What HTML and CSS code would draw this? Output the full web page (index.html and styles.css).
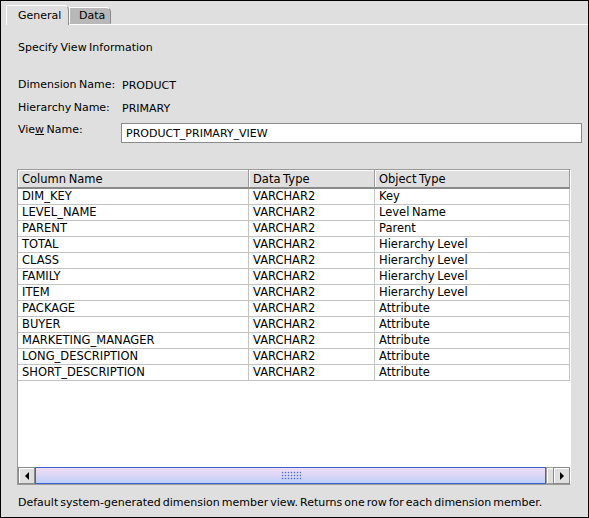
FILE: index.html
```html
<html>

<head>
    <meta name="viewport" content="width=device-width, initial-scale=1.0">
    <title>Create View</title>
    <link rel="stylesheet" href="styles.css">
</head>

<body>
    <div class="window">
        <div class="tabs">
            <div class="tab tab-active">General</div>
            <div class="tab tab-data">Data</div>
        </div>
        <div class="panel">
            <p class="intro">Specify View Information</p>
            <div class="fields">
                <div class="field">
                    <span class="label">Dimension Name:</span>
                    <span class="value">PRODUCT</span>
                </div>
                <div class="field">
                    <span class="label">Hierarchy Name:</span>
                    <span class="value">PRIMARY</span>
                </div>
                <div class="field field-input">
                    <label class="label">Vie<u>w</u> Name:</label>
                    <div class="text-input">PRODUCT_PRIMARY_VIEW</div>
                </div>
            </div>
            <div class="grid-pane">
                <div class="grid-view">
                    <table class="grid">
                        <colgroup>
                            <col class="col-name">
                            <col class="col-type">
                            <col class="col-object">
                        </colgroup>
                        <thead>
                            <tr><th>Column Name</th><th>Data Type</th><th>Object Type</th></tr>
                        </thead>
                        <tbody>
                            <tr><td>DIM_KEY</td><td>VARCHAR2</td><td>Key</td></tr>
                            <tr><td>LEVEL_NAME</td><td>VARCHAR2</td><td>Level Name</td></tr>
                            <tr><td>PARENT</td><td>VARCHAR2</td><td>Parent</td></tr>
                            <tr><td>TOTAL</td><td>VARCHAR2</td><td>Hierarchy Level</td></tr>
                            <tr><td>CLASS</td><td>VARCHAR2</td><td>Hierarchy Level</td></tr>
                            <tr><td>FAMILY</td><td>VARCHAR2</td><td>Hierarchy Level</td></tr>
                            <tr><td>ITEM</td><td>VARCHAR2</td><td>Hierarchy Level</td></tr>
                            <tr><td>PACKAGE</td><td>VARCHAR2</td><td>Attribute</td></tr>
                            <tr><td>BUYER</td><td>VARCHAR2</td><td>Attribute</td></tr>
                            <tr><td>MARKETING_MANAGER</td><td>VARCHAR2</td><td>Attribute</td></tr>
                            <tr><td>LONG_DESCRIPTION</td><td>VARCHAR2</td><td>Attribute</td></tr>
                            <tr><td>SHORT_DESCRIPTION</td><td>VARCHAR2</td><td>Attribute</td></tr>
                        </tbody>
                    </table>
                </div>
                <div class="hscroll">
                    <div class="scroll-btn"><span class="arrow arrow-left"></span></div>
                    <div class="scroll-thumb"><span class="grip"></span></div>
                    <div class="scroll-track"></div>
                    <div class="scroll-btn"><span class="arrow arrow-right"></span></div>
                </div>
            </div>
            <p class="note">Default system-generated dimension member view. Returns one row for each dimension member.</p>
        </div>
    </div>
</body>

</html>
```

FILE: styles.css
```css
* {
    box-sizing: border-box;
}

body {
    margin: 0;
    background-color: #fff;
    font-family: "DejaVu Sans", sans-serif;
    font-size: 11px;
    color: #000;
    word-spacing: -1px;
}

.window {
    width: 589px;
    height: 518px;
    border: 1px solid #000;
    background-color: #dfdfdf;
    display: flex;
    flex-direction: column;
}

/* tabs */

.tabs {
    display: flex;
    align-items: flex-end;
    height: 23px;
    padding: 4px 0 0 5px;
}

.tab {
    height: 17px;
    line-height: 16px;
    border: 1px solid;
    border-color: #fff #8a8a8a transparent #fff;
    border-radius: 0 5px 0 0;
    background-color: #b8b8b8;
}

.tab-active {
    width: 63px;
    height: 20px;
    padding-left: 11px;
    line-height: 19px;
    margin-bottom: -1px;
    background-color: #dfdfdf;
    border-bottom: none;
    position: relative;
    z-index: 1;
}

.tab-data {
    width: 42px;
    padding-left: 9px;
}

/* panel */

.panel {
    flex: 1;
    margin-left: 5px;
    border-top: 1px solid #fff;
    padding: 0 6px 0 12px;
}

.intro {
    margin: 16px 0 0;
    line-height: 14px;
}

.fields {
    margin-top: 18px;
}

.field {
    display: flex;
    align-items: center;
    height: 23px;
}

.label {
    width: 103px;
    flex-shrink: 0;
}

.value {
    padding: 2px 0 0 1px;
}

.field-input {
    height: 24px;
    align-items: flex-start;
}

.field-input .label {
    padding-top: 4px;
    line-height: 14px;
}

.text-input {
    flex: 1;
    margin-top: 4px;
    height: 20px;
    line-height: 19px;
    padding: 0 4px;
    border: 1px solid #8a8a8a;
    background-color: #fff;
}

/* table */

.grid-pane {
    margin: 26px 0 0 -1px;
    width: 554px;
    height: 316px;
    border: 1px solid #9a9a9a;
    border-right-color: #fff;
    background-color: #fff;
    display: flex;
    flex-direction: column;
}

.grid-view {
    flex: 1;
    overflow: hidden;
}

.grid {
    table-layout: fixed;
    width: 552px;
    border-collapse: separate;
    border-spacing: 0;
    font-size: 11.5px;
    word-spacing: -1px;
}

.col-name {
    width: 231px;
}

.col-type {
    width: 126px;
}

.col-object {
    width: 195px;
}

.grid th {
    height: 19px;
    padding: 1px 4px 0;
    text-align: left;
    font-weight: normal;
    background-color: #dfdfdf;
    border-right: 1px solid #9a9a9a;
    border-bottom: 2px solid #8a8a8a;
    box-shadow: inset 1px 1px #fff;
}

.grid td {
    height: 16px;
    padding: 0 4px;
    line-height: 15px;
    white-space: nowrap;
    border-right: 1px solid #c4c4c4;
    border-bottom: 1px solid #c4c4c4;
}

/* horizontal scrollbar */

.hscroll {
    display: flex;
    height: 17px;
    flex-shrink: 0;
}

.scroll-btn {
    width: 17px;
    display: flex;
    justify-content: center;
    align-items: center;
    background-color: #dfdfdf;
    border: 1px solid #8a8a8a;
    box-shadow: inset 1px 1px #fff;
}

.arrow {
    width: 0;
    height: 0;
    border-top: 4px solid transparent;
    border-bottom: 4px solid transparent;
}

.arrow-left {
    border-right: 4px solid #000;
}

.arrow-right {
    border-left: 4px solid #000;
}

.scroll-thumb {
    width: 511px;
    display: flex;
    justify-content: center;
    align-items: center;
    border: 1px solid #3a64cc;
    background-image: linear-gradient(to bottom, #eedcf4, #dcd6f6 50%, #bccff8);
}

.grip {
    width: 20px;
    height: 9px;
    background-image: radial-gradient(#4a70d4 35%, transparent 50%);
    background-size: 3px 3px;
}

.scroll-track {
    width: 7px;
    background-color: #dfdfdf;
    border: 1px solid #a0a0a0;
    border-right: none;
    box-shadow: inset 1px 1px #fff;
}

.note {
    margin: 11px 0 0;
    line-height: 14px;
    word-spacing: -1.5px;
}
```
